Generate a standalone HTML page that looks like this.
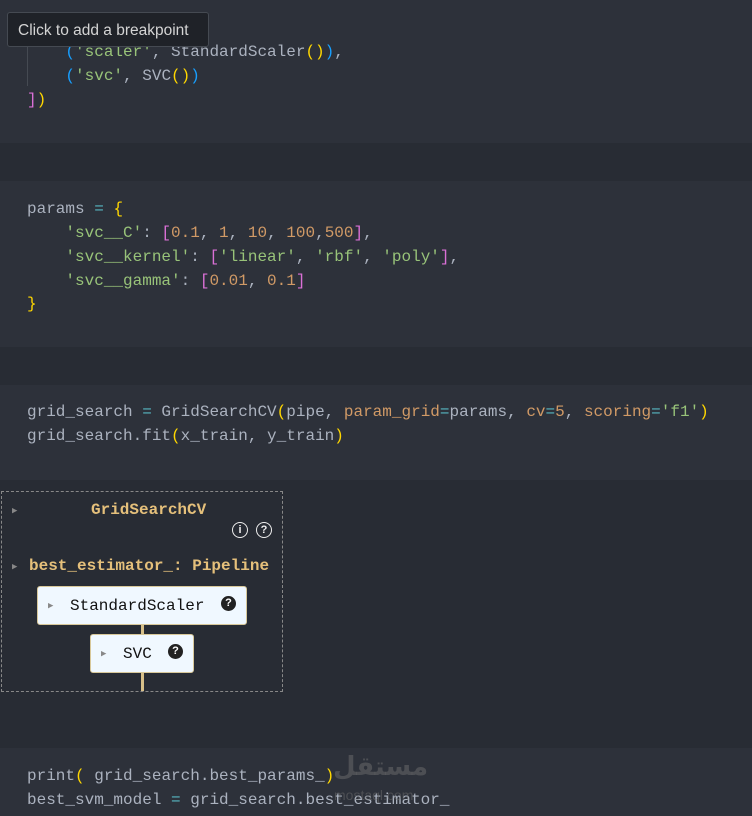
<!DOCTYPE html>
<html><head><style>
body{margin:0;width:752px;height:816px;background:#282c34;position:relative;overflow:hidden;font-family:"Liberation Mono",monospace;font-size:16px;color:#abb2bf}
.cell{position:absolute;left:0;width:752px;background:#2d313a}
.l{position:absolute;left:27px;white-space:pre;line-height:24px;height:24px}
.s{color:#98c379}.n{color:#d19a66}.y{color:#ffd700}.b{color:#179fff}.m{color:#da70d6}.o{color:#d19a66}.c{color:#56b6c2}
.tip{position:absolute;left:7px;top:12px;width:202px;height:35px;background:#1f2228;border:1px solid #454a52;border-radius:3px;font-family:"Liberation Sans",sans-serif;font-size:15.5px;color:#d4d4d4;line-height:35px;text-indent:10px;box-sizing:border-box}
.g{color:#e5c07b;font-weight:bold;position:absolute;white-space:pre}
.tri{position:absolute;color:#888;font-size:9px}
.box{position:absolute;background:#f0f8ff;border:1px solid #d8c89a;border-radius:3px;color:#111;box-sizing:border-box}
.q{display:inline-block;width:15px;height:15px;border-radius:50%;background:#222;color:#fff;font:bold 11px "Liberation Sans",sans-serif;text-align:center;line-height:15px;position:absolute}
.qo{display:inline-block;width:14px;height:14px;border-radius:50%;border:1.5px solid #eee;color:#eee;font:bold 11px "Liberation Sans",sans-serif;text-align:center;line-height:14px;position:absolute}
</style></head><body>
<div class="cell" style="top:0;height:143px"></div>
<div style="position:absolute;left:27px;top:40px;width:1px;height:46px;background:#454a52"></div>
<div class="l" style="top:40px">    <span class="b">(</span><span class="s">'scaler'</span>, StandardScaler<span class="y">()</span><span class="b">)</span>,</div>
<div class="l" style="top:64px">    <span class="b">(</span><span class="s">'svc'</span>, SVC<span class="y">()</span><span class="b">)</span></div>
<div class="l" style="top:88px"><span class="m">]</span><span class="y">)</span></div>
<div class="tip">Click to add a breakpoint</div>

<div class="cell" style="top:181px;height:166px"></div>
<div class="l" style="top:197px">params <span class="c">=</span> <span class="y">{</span></div>
<div class="l" style="top:221px">    <span class="s">'svc__C'</span>: <span class="m">[</span><span class="n">0.1</span>, <span class="n">1</span>, <span class="n">10</span>, <span class="n">100</span>,<span class="n">500</span><span class="m">]</span>,</div>
<div class="l" style="top:245px">    <span class="s">'svc__kernel'</span>: <span class="m">[</span><span class="s">'linear'</span>, <span class="s">'rbf'</span>, <span class="s">'poly'</span><span class="m">]</span>,</div>
<div class="l" style="top:269px">    <span class="s">'svc__gamma'</span>: <span class="m">[</span><span class="n">0.01</span>, <span class="n">0.1</span><span class="m">]</span></div>
<div class="l" style="top:292px"><span class="y">}</span></div>

<div class="cell" style="top:385px;height:95px"></div>
<div class="l" style="top:400px">grid_search <span class="c">=</span> GridSearchCV<span class="y">(</span>pipe, <span class="o">param_grid</span><span class="c">=</span>params, <span class="o">cv</span><span class="c">=</span><span class="n">5</span>, <span class="o">scoring</span><span class="c">=</span><span class="s">'f1'</span><span class="y">)</span></div>
<div class="l" style="top:424px">grid_search.fit<span class="y">(</span>x_train, y_train<span class="y">)</span></div>

<div style="position:absolute;left:1px;top:491px;width:280px;height:199px;border:1px dashed #888"></div>
<span class="tri" style="left:12px;top:506px">▶</span>
<div class="g" style="left:91px;top:501px">GridSearchCV</div>
<span class="qo" style="left:232px;top:522px">i</span><span class="qo" style="left:256px;top:522px">?</span>
<span class="tri" style="left:12px;top:562px">▶</span>
<div class="g" style="left:29px;top:557px">best_estimator_: Pipeline</div>
<div style="position:absolute;left:141px;top:620px;width:3px;height:71px;background:#d8c089"></div>
<div class="box" style="left:37px;top:586px;width:210px;height:39px"><span class="tri" style="left:10px;top:14px">▶</span><span style="position:absolute;left:32px;top:10px">StandardScaler</span><span class="q" style="left:183px;top:9px">?</span></div>
<div class="box" style="left:90px;top:634px;width:104px;height:39px"><span class="tri" style="left:10px;top:14px">▶</span><span style="position:absolute;left:32px;top:10px">SVC</span><span class="q" style="left:77px;top:9px">?</span></div>

<div class="cell" style="top:748px;height:68px"></div>
<div class="l" style="top:764px">print<span class="y">(</span> grid_search.best_params_<span class="y">)</span></div>
<div class="l" style="top:788px">best_svm_model <span class="c">=</span> grid_search.best_estimator_</div>
<div style="position:absolute;left:333px;top:752px;font:bold 26px 'DejaVu Sans',sans-serif;color:rgba(110,110,110,.5)">مستقل</div>
<div style="position:absolute;left:334px;top:787px;font:14px 'Liberation Sans',sans-serif;color:rgba(110,110,110,.5)">mostaql.com</div>
</body></html>
